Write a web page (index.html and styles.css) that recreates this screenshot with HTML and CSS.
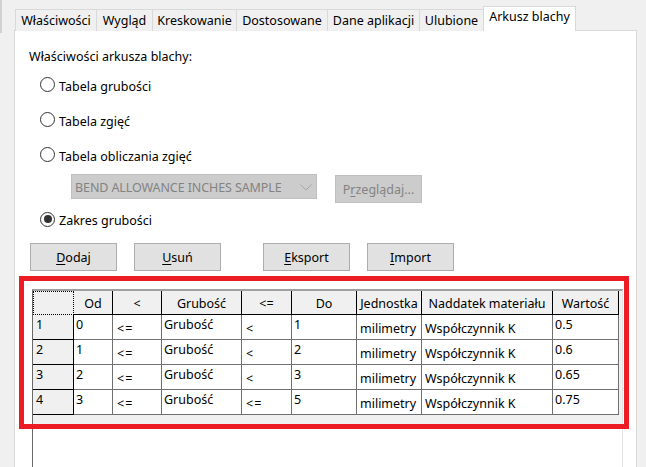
FILE: index.html
```html
<!DOCTYPE html>
<html lang="pl">
<head>
<meta charset="utf-8">
<link rel="stylesheet" href="styles.css">
</head>
<body>
<div class="window">
  <div class="tabs">
    <div class="tab t1">Właściwości</div>
    <div class="tab t2">Wygląd</div>
    <div class="tab t3">Kreskowanie</div>
    <div class="tab t4">Dostosowane</div>
    <div class="tab t5">Dane aplikacji</div>
    <div class="tab t6">Ulubione</div>
    <div class="tab t7 active">Arkusz blachy</div>
  </div>
  <div class="panel">
    <div class="title">Właściwości arkusza blachy:</div>
    <div class="radio"><span class="circle"></span><span class="label">Tabela grubości</span></div>
    <div class="radio"><span class="circle"></span><span class="label">Tabela zgięć</span></div>
    <div class="radio"><span class="circle"></span><span class="label">Tabela obliczania zgięć</span></div>
    <div class="combo-row">
      <div class="combo"><span class="combo-text">BEND ALLOWANCE INCHES SAMPLE</span>
        <svg class="chevron" width="12" height="7" viewBox="0 0 12 7"><path d="M0.5 0.5 L6 6 L11.5 0.5" fill="none" stroke="#a6a6a6" stroke-width="1"/></svg>
      </div>
      <div class="btn disabled browse">P<u>r</u>zeglądaj...</div>
    </div>
    <div class="radio checked"><span class="circle"><span class="dot"></span></span><span class="label">Zakres grubości</span></div>
    <div class="buttons">
      <div class="btn"><u>D</u>odaj</div>
      <div class="btn"><u>U</u>suń</div>
      <div class="btn gap"><u>E</u>ksport</div>
      <div class="btn"><u>I</u>mport</div>
    </div>
    <div class="gridbox">
      <div class="grid-area">
        <div class="grid">
          <div class="h corner"></div>
          <div class="h">Od</div>
          <div class="h">&lt;</div>
          <div class="h">Grubość</div>
          <div class="h">&lt;=</div>
          <div class="h">Do</div>
          <div class="h">Jednostka</div>
          <div class="h">Naddatek materiału</div>
          <div class="h">Wartość</div>

          <div class="rh">1</div>
          <div class="c">0</div>
          <div class="c cb sym">&lt;=</div>
          <div class="c">Grubość</div>
          <div class="c cb sym">&lt;</div>
          <div class="c">1</div>
          <div class="c cb">milimetry</div>
          <div class="c cb">Współczynnik K</div>
          <div class="c">0.5</div>

          <div class="rh">2</div>
          <div class="c">1</div>
          <div class="c cb sym">&lt;=</div>
          <div class="c">Grubość</div>
          <div class="c cb sym">&lt;</div>
          <div class="c">2</div>
          <div class="c cb">milimetry</div>
          <div class="c cb">Współczynnik K</div>
          <div class="c">0.6</div>

          <div class="rh">3</div>
          <div class="c">2</div>
          <div class="c cb sym">&lt;=</div>
          <div class="c">Grubość</div>
          <div class="c cb sym">&lt;</div>
          <div class="c">3</div>
          <div class="c cb">milimetry</div>
          <div class="c cb">Współczynnik K</div>
          <div class="c">0.65</div>

          <div class="rh">4</div>
          <div class="c">3</div>
          <div class="c cb sym">&lt;=</div>
          <div class="c">Grubość</div>
          <div class="c cb sym">&lt;=</div>
          <div class="c">5</div>
          <div class="c cb">milimetry</div>
          <div class="c cb">Współczynnik K</div>
          <div class="c">0.75</div>
        </div>
      </div>
    </div>
  </div>
</div>
<div class="highlight"></div>
</body>
</html>
```
FILE: styles.css
```css
* { box-sizing: border-box; }
html, body { margin: 0; padding: 0; }
body {
  width: 646px;
  height: 467px;
  overflow: hidden;
  background: linear-gradient(#d2d2d2, #d2d2d2) 0 0 / 2px 33px no-repeat, #f0f0f0;
  font-family: "Noto Sans", "Open Sans", sans-serif;
  font-size: 12.5px;
  color: #000;
  position: relative;
}
.window { padding-top: 6px; }
.tabs {
  display: flex;
  align-items: flex-end;
  margin-left: 15px;
  height: 25px;
  position: relative;
  z-index: 2;
}
.tab {
  height: 22px;
  border: 1px solid #d9d9d9;
  border-right: none;
  border-bottom: none;
  background: #f0f0f0;
  text-align: center;
  line-height: 20px;
  white-space: nowrap;
  padding-top: 1px;
}
.t1 { width: 81px; }
.t2 { width: 56px; }
.t3 { width: 84px; }
.t4 { width: 91px; }
.t5 { width: 92px; }
.t6 { width: 64px; }
.tab.active {
  width: 93px;
  height: 25px;
  background: #fff;
  border-right: 1px solid #d9d9d9;
  line-height: 19px;
  padding-top: 0;
}
.panel {
  margin-left: 14px;
  width: 623px;
  height: 450px;
  margin-top: -1px;
  border: 1px solid #d9d9d9;
  background: #fff;
}
.title {
  margin-top: 16px;
  margin-left: 14px;
  line-height: 20px;
}
.radio {
  display: flex;
  align-items: center;
  height: 35px;
  margin-left: 25px;
}
.circle {
  width: 15px;
  height: 15px;
  border: 1px solid #333;
  border-radius: 50%;
  display: flex;
  align-items: center;
  justify-content: center;
  flex: none;
}
.dot {
  width: 8px;
  height: 8px;
  border-radius: 50%;
  background: #333;
}
.label { margin-left: 4px; padding-top: 3px; }
.radio.checked { height: 30px; }
.combo-row {
  display: flex;
  align-items: flex-start;
  height: 32px;
  padding-top: 2px;
  margin-left: 56px;
}
.combo {
  width: 246px;
  height: 25px;
  background: #cccccc;
  border: 1px solid #bfbfbf;
  display: flex;
  align-items: center;
  justify-content: space-between;
  padding: 0 4px 0 3px;
  color: #838383;
}
.combo-text { padding-top: 1px; letter-spacing: -0.1px; }
.chevron { display: block; margin-top: 1px; }
.btn {
  width: 87px;
  height: 28px;
  background: #e1e1e1;
  border: 1px solid #adadad;
  display: flex;
  align-items: center;
  justify-content: center;
  padding-top: 1px;
}
.btn u { text-underline-offset: 2px; }
.btn.disabled {
  background: #cccccc;
  border-color: #bfbfbf;
  color: #838383;
}
.browse { margin-left: 18px; margin-top: 1px; width: 87px; }
.buttons {
  display: flex;
  margin-top: 9px;
  margin-left: 15px;
}
.buttons .btn + .btn { margin-left: 17px; }
.buttons .btn.gap { margin-left: 42px; }
.gridbox {
  margin-top: 18px;
  margin-left: 17px;
  width: 591px;
  height: 200px;
  border-top: 2px solid #a0a0a0;
  border-left: 1px solid #696969;
  border-right: 1px solid #e3e3e3;
  background: #fff;
}
.grid-area {
  background: #f0f0f0;
  padding-bottom: 10px;
}
.grid {
  display: grid;
  grid-template-columns: 41px 39px 49px 80px 50px 65px 65px 131px 66px;
  grid-template-rows: 24px 25px 25px 25px 25px;
}
.h {
  background: #f0f0f0;
  border-right: 1px solid #000;
  border-bottom: 1px solid #000;
  display: flex;
  align-items: center;
  justify-content: center;
  white-space: nowrap;
  padding-top: 1px;
}
.h.corner {
  border: 1px dotted #000;
}
.rh {
  background: #f0f0f0;
  border-right: 1px solid #000;
  border-bottom: 1px solid #000;
  padding: 2px 0 0 3px;
  line-height: 16px;
}
.c {
  background: #fff;
  border-right: 1px solid #707070;
  border-bottom: 1px solid #707070;
  padding: 2px 0 0 2px;
  line-height: 16px;
  white-space: nowrap;
}
.c.cb { padding: 6px 0 0 3px; }
.c.sym { padding-left: 4px; letter-spacing: 1px; }
.highlight {
  position: absolute;
  left: 19px;
  top: 276px;
  width: 610px;
  height: 153px;
  border: 5px solid #ec1c24;
  pointer-events: none;
}
```
